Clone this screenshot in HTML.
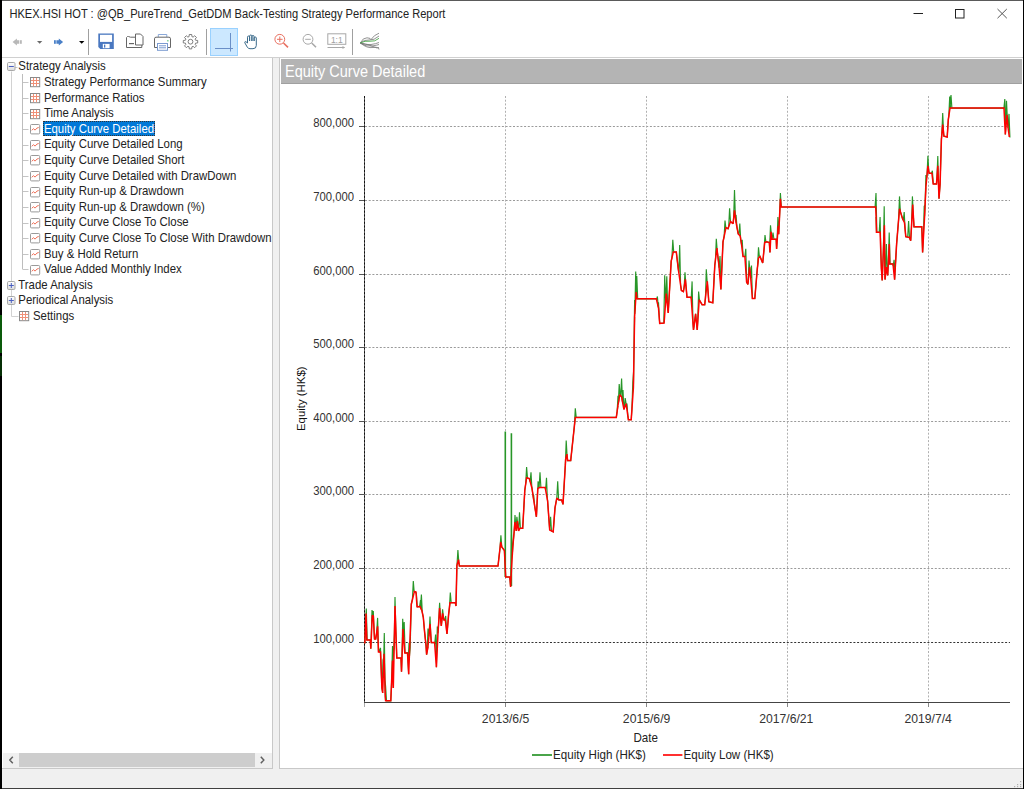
<!DOCTYPE html>
<html><head><meta charset="utf-8">
<style>
*{margin:0;padding:0;box-sizing:border-box}
html,body{width:1024px;height:789px;overflow:hidden;background:#fff;font-family:"Liberation Sans",sans-serif;color:#000}
.a{position:absolute}
.t{position:absolute;white-space:nowrap;line-height:1}
svg{position:absolute;overflow:visible}
</style></head><body>

<div class="a" style="left:0;top:0;width:1024px;height:1px;background:#5a5a5a"></div>
<div class="t" style="left:9.40px;top:8.60px;font-size:11.1px;color:#222;transform:scaleY(1.1);transform-origin:0 9.40px;">HKEX.HSI HOT : @QB_PureTrend_GetDDM Back-Testing Strategy Performance Report</div>
<div class="a" style="left:2px;top:57px;width:1021px;height:1px;background:#d0d0d0"></div>
<div class="a" style="left:2px;top:58px;width:271px;height:711px;background:#fff;border-right:1px solid #c8c8c8;border-bottom:1px solid #c8c8c8"></div>
<div class="a" style="left:273px;top:58px;width:6px;height:711px;background:#f0f0f0"></div>
<div class="a" style="left:279px;top:58px;width:744px;height:711px;background:#fff;border-left:1px solid #c8c8c8;border-bottom:1px solid #c8c8c8"></div>
<div class="a" style="left:281px;top:59px;width:741px;height:24.5px;background:#b4b4b4;border-bottom:1.2px solid #a0a0a0"></div>
<div class="t" style="left:285.00px;top:64.93px;font-size:14.5px;color:#fff;transform:scaleY(1.1);transform-origin:0 12.27px;">Equity Curve Detailed</div>
<svg style="left:900px;top:0" width="124" height="26" viewBox="900 0 124 26"><path d="M913.5 13.5H923" stroke="#222" stroke-width="1"/><rect x="955.5" y="9.5" width="8.5" height="8.5" fill="none" stroke="#222" stroke-width="1"/><path d="M997.5 9L1006.8 18.2M1006.8 9L997.5 18.2" stroke="#555" stroke-width="1"/></svg>
<svg style="left:0;top:25px" width="400" height="32" viewBox="0 25 400 32"><path d="M12.6 42L16.9 38.6V40.2H19.3V43.8H16.9V45.4Z" fill="#b8b8b8"/><rect x="20" y="40.2" width="1.8" height="3.6" fill="#b8b8b8"/><path d="M37 41H42.3L39.65 43.7Z" fill="#6a6a6a"/><rect x="54" y="40.2" width="1.8" height="3.6" fill="#4a80c8"/><path d="M56.4 40.2H58.8V38.6L63.1 42L58.8 45.4V43.8H56.4Z" fill="#4a80c8"/><path d="M79 41H84.4L81.7 43.7Z" fill="#000"/><path d="M88.5 29V55" stroke="#a0a0a0" stroke-width="1"/><path d="M206.5 29V55" stroke="#a0a0a0" stroke-width="1"/><path d="M352.5 29V55" stroke="#a0a0a0" stroke-width="1"/><path d="M98.3 33.4H113.8V48.9H100.3L98.3 46.9Z" fill="#4a78c0"/><rect x="100" y="34.8" width="12.1" height="7.1" fill="#fff"/><rect x="102.8" y="43.9" width="6.8" height="4.3" fill="#fff"/><rect x="104" y="44.6" width="1.3" height="3" fill="#4a78c0"/><path d="M135.5 37.2H130.5L128.5 36.5H127.5L126.5 37.5V47.5H141.8V45" fill="none" stroke="#666" stroke-width="1"/><path d="M135.5 34H140.5L143 36.5V45H135.5Z" fill="#fff" stroke="#666" stroke-width="1"/><path d="M129 43.6H134" stroke="#666" stroke-width="1.2"/><path d="M158.3 37V34.5H166.8V37" fill="none" stroke="#8aa8d8" stroke-width="1"/><path d="M157 47.5H154.5V38.8Q154.5 37.2 156 37.2H169Q170.5 37.2 170.5 38.8V47.5H168" fill="#fff" stroke="#666" stroke-width="1"/><rect x="157.5" y="43.5" width="10" height="6.8" fill="#fff" stroke="#7a9ad0" stroke-width="1"/><path d="M159 45.8H166M159 47.8H166" stroke="#7a9ad0" stroke-width="1"/><rect x="167.2" y="40.2" width="1.3" height="1.2" fill="#4cbf6c"/><path d="M189.09 36.59L189.26 34.51L191.74 34.51L191.91 36.59L193.11 37.09L194.71 35.74L196.46 37.49L195.11 39.09L195.61 40.29L197.69 40.46L197.69 42.94L195.61 43.11L195.11 44.31L196.46 45.91L194.71 47.66L193.11 46.31L191.91 46.81L191.74 48.89L189.26 48.89L189.09 46.81L187.89 46.31L186.29 47.66L184.54 45.91L185.89 44.31L185.39 43.11L183.31 42.94L183.31 40.46L185.39 40.29L185.89 39.09L184.54 37.49L186.29 35.74L187.89 37.09Z" fill="none" stroke="#707070" stroke-width="0.9"/><circle cx="190.5" cy="41.7" r="2.4" fill="none" stroke="#707070" stroke-width="0.9"/><rect x="210.5" y="28.5" width="27" height="27" fill="#cce8ff" stroke="#99d1ff" stroke-width="1"/><path d="M230.5 33V51.5M215 48.5H233" stroke="#6a8fc8" stroke-width="1"/><path d="M247.5 47.5L244.8 42.8Q244.5 41.5 245.8 41.6L247.5 43V37.2Q247.5 36 248.6 36Q249.6 36 249.6 37.2V41V36.2Q249.6 35 250.8 35Q251.9 35 251.9 36.2V41V36.6Q251.9 35.5 253 35.5Q254.1 35.5 254.1 36.6V41V38Q254.1 37 255.2 37Q256.3 37 256.3 38V45.5Q256.3 48.7 253 48.7H250Q248.7 48.7 247.5 47.5Z" fill="#fff" stroke="#3a6a8a" stroke-width="1"/><circle cx="279.8" cy="39.3" r="4.9" fill="none" stroke="#e87060" stroke-width="1"/><path d="M283.5 43L288 47.4" stroke="#e87060" stroke-width="1.6"/><path d="M277 39.3H282.6M279.8 36.5V42.1" stroke="#e87060" stroke-width="1"/><circle cx="308" cy="39.3" r="4.9" fill="none" stroke="#a8a8a8" stroke-width="1"/><path d="M311.7 43L316 47.2" stroke="#a8a8a8" stroke-width="1.6"/><path d="M305.2 39.3H310.8" stroke="#a8a8a8" stroke-width="1"/><rect x="327.8" y="33.8" width="18" height="10.5" fill="none" stroke="#a8a8a8" stroke-width="1"/><path d="M327.5 47.5H344.5" stroke="#a8a8a8" stroke-width="1"/><path d="M342.5 46L345 47.5L342.5 49" fill="#a8a8a8"/><text x="336.8" y="42.6" font-size="8.5" text-anchor="middle" fill="#a0a0a0" font-family="Liberation Sans">1:1</text><g fill="none" stroke="#777" stroke-width="0.8"><path d="M360.3 43Q363 37.5 367 37.8T371 39.5Q374 35 379 33.2"/><path d="M360.3 43Q364 39.5 369 40T379 36"/><path d="M360.3 43Q366 45.2 371 44.5T379 42.5"/><path d="M360.3 43Q366 47 372 46T379 44.5"/><path d="M360.3 43Q367 48.5 373 47.5T379 49.5"/><path d="M360.3 43Q368 44 373 46.5T379 47.5"/></g><path d="M360.3 43Q365 40.5 370 41.2T379 38.3" fill="none" stroke="#4aa84a" stroke-width="0.9"/></svg>
<div class="a" style="left:3px;top:753px;width:269px;height:15px;background:#f0f0f0"></div>
<div class="a" style="left:19px;top:753px;width:236px;height:14px;background:#cdcdcd"></div>
<svg style="left:0;top:750px" width="280" height="20" viewBox="0 750 280 20"><path d="M12.8 756.8L9.8 760L12.8 763.2M260.8 756.8L263.8 760L260.8 763.2" fill="none" stroke="#606060" stroke-width="1.5"/></svg>
<svg style="left:0;top:0" width="280" height="340" viewBox="0 0 280 340"><path d="M11.5 71.5V316.5H18.5" stroke="#d2d2d2" stroke-width="1" fill="none"/><path d="M22.5 74V269.5" stroke="#bdbdbd" stroke-width="1" fill="none"/><path d="M23 82.5H28.5" stroke="#c4c4c4" stroke-width="1" fill="none"/><path d="M23 98.5H28.5" stroke="#c4c4c4" stroke-width="1" fill="none"/><path d="M23 113.5H28.5" stroke="#c4c4c4" stroke-width="1" fill="none"/><path d="M23 129.5H28.5" stroke="#c4c4c4" stroke-width="1" fill="none"/><path d="M23 145.5H28.5" stroke="#c4c4c4" stroke-width="1" fill="none"/><path d="M23 160.5H28.5" stroke="#c4c4c4" stroke-width="1" fill="none"/><path d="M23 176.5H28.5" stroke="#c4c4c4" stroke-width="1" fill="none"/><path d="M23 191.5H28.5" stroke="#c4c4c4" stroke-width="1" fill="none"/><path d="M23 207.5H28.5" stroke="#c4c4c4" stroke-width="1" fill="none"/><path d="M23 223.5H28.5" stroke="#c4c4c4" stroke-width="1" fill="none"/><path d="M23 238.5H28.5" stroke="#c4c4c4" stroke-width="1" fill="none"/><path d="M23 254.5H28.5" stroke="#c4c4c4" stroke-width="1" fill="none"/><path d="M23 269.5H28.5" stroke="#c4c4c4" stroke-width="1" fill="none"/><path d="M15 67.5H17.5" stroke="#c8c8c8" stroke-width="1"/><defs><linearGradient id="g0" x1="0" y1="0" x2="0" y2="1"><stop offset="0" stop-color="#fff"/><stop offset="1" stop-color="#dcdcdc"/></linearGradient></defs><rect x="7.5" y="62.5" width="7.5" height="8" rx="1.2" fill="url(#g0)" stroke="#a8a8a8"/><path d="M8.8 66.5H13.8" stroke="#4a5fc0" stroke-width="1"/><rect x="30.5" y="77.5" width="9.2" height="9.2" fill="#fff" stroke="#8a8a8a" stroke-width="1"/><path d="M33.5 78.0V86.2M36.5 78.0V86.2M31.0 80.5H39.2M31.0 83.5H39.2" stroke="#f09078" stroke-width="1"/><rect x="30.5" y="93.5" width="9.2" height="9.2" fill="#fff" stroke="#8a8a8a" stroke-width="1"/><path d="M33.5 94.0V102.2M36.5 94.0V102.2M31.0 96.5H39.2M31.0 99.5H39.2" stroke="#f09078" stroke-width="1"/><rect x="30.5" y="109.5" width="9.2" height="9.2" fill="#fff" stroke="#8a8a8a" stroke-width="1"/><path d="M33.5 110.0V118.2M36.5 110.0V118.2M31.0 112.5H39.2M31.0 115.5H39.2" stroke="#f09078" stroke-width="1"/><rect x="30.5" y="124.5" width="9.2" height="9.4" rx="1" fill="#fff" stroke="#9a9a9a" stroke-width="1"/><path d="M31.7 130.3L33.5 128.7L35.1 130.1L36.9 128.1L38.7 127.5" stroke="#f07058" stroke-width="1" fill="none"/><rect x="30.5" y="140.5" width="9.2" height="9.4" rx="1" fill="#fff" stroke="#9a9a9a" stroke-width="1"/><path d="M31.7 146.3L33.5 144.7L35.1 146.1L36.9 144.1L38.7 143.5" stroke="#f07058" stroke-width="1" fill="none"/><rect x="30.5" y="155.5" width="9.2" height="9.4" rx="1" fill="#fff" stroke="#9a9a9a" stroke-width="1"/><path d="M31.7 161.3L33.5 159.7L35.1 161.1L36.9 159.1L38.7 158.5" stroke="#f07058" stroke-width="1" fill="none"/><rect x="30.5" y="171.5" width="9.2" height="9.4" rx="1" fill="#fff" stroke="#9a9a9a" stroke-width="1"/><path d="M31.7 177.3L33.5 175.7L35.1 177.1L36.9 175.1L38.7 174.5" stroke="#f07058" stroke-width="1" fill="none"/><rect x="30.5" y="187.5" width="9.2" height="9.4" rx="1" fill="#fff" stroke="#9a9a9a" stroke-width="1"/><path d="M31.7 193.3L33.5 191.7L35.1 193.1L36.9 191.1L38.7 190.5" stroke="#f07058" stroke-width="1" fill="none"/><rect x="30.5" y="202.5" width="9.2" height="9.4" rx="1" fill="#fff" stroke="#9a9a9a" stroke-width="1"/><path d="M31.7 208.3L33.5 206.7L35.1 208.1L36.9 206.1L38.7 205.5" stroke="#f07058" stroke-width="1" fill="none"/><rect x="30.5" y="218.5" width="9.2" height="9.4" rx="1" fill="#fff" stroke="#9a9a9a" stroke-width="1"/><path d="M31.7 224.3L33.5 222.7L35.1 224.1L36.9 222.1L38.7 221.5" stroke="#f07058" stroke-width="1" fill="none"/><rect x="30.5" y="233.5" width="9.2" height="9.4" rx="1" fill="#fff" stroke="#9a9a9a" stroke-width="1"/><path d="M31.7 239.3L33.5 237.7L35.1 239.1L36.9 237.1L38.7 236.5" stroke="#f07058" stroke-width="1" fill="none"/><rect x="30.5" y="249.5" width="9.2" height="9.4" rx="1" fill="#fff" stroke="#9a9a9a" stroke-width="1"/><path d="M31.7 255.3L33.5 253.7L35.1 255.1L36.9 253.1L38.7 252.5" stroke="#f07058" stroke-width="1" fill="none"/><rect x="30.5" y="265.5" width="9.2" height="9.4" rx="1" fill="#fff" stroke="#9a9a9a" stroke-width="1"/><path d="M31.7 271.3L33.5 269.7L35.1 271.1L36.9 269.1L38.7 268.5" stroke="#f07058" stroke-width="1" fill="none"/><defs><linearGradient id="g14" x1="0" y1="0" x2="0" y2="1"><stop offset="0" stop-color="#fff"/><stop offset="1" stop-color="#dcdcdc"/></linearGradient></defs><rect x="7.5" y="281.5" width="7.5" height="8" rx="1.2" fill="url(#g14)" stroke="#a8a8a8"/><path d="M8.8 285.5H13.8" stroke="#4a5fc0" stroke-width="1"/><path d="M11.3 283.0V288.0" stroke="#4a5fc0" stroke-width="1"/><defs><linearGradient id="g15" x1="0" y1="0" x2="0" y2="1"><stop offset="0" stop-color="#fff"/><stop offset="1" stop-color="#dcdcdc"/></linearGradient></defs><rect x="7.5" y="296.5" width="7.5" height="8" rx="1.2" fill="url(#g15)" stroke="#a8a8a8"/><path d="M8.8 300.5H13.8" stroke="#4a5fc0" stroke-width="1"/><path d="M11.3 298.0V303.0" stroke="#4a5fc0" stroke-width="1"/><rect x="19.5" y="311.5" width="9.2" height="9.2" fill="#fff" stroke="#8a8a8a" stroke-width="1"/><path d="M22.5 312.0V320.2M25.5 312.0V320.2M20.0 314.5H28.2M20.0 317.5H28.2" stroke="#f09078" stroke-width="1"/></svg>
<div class="t" style="left:18.30px;top:61.45px;font-size:11.4px;color:#222;transform:scaleY(1.1);transform-origin:0 9.65px;">Strategy Analysis</div>
<div class="t" style="left:43.90px;top:77.05px;font-size:11.4px;color:#222;transform:scaleY(1.1);transform-origin:0 9.65px;">Strategy Performance Summary</div>
<div class="t" style="left:43.90px;top:92.65px;font-size:11.4px;color:#222;transform:scaleY(1.1);transform-origin:0 9.65px;">Performance Ratios</div>
<div class="t" style="left:43.90px;top:108.25px;font-size:11.4px;color:#222;transform:scaleY(1.1);transform-origin:0 9.65px;">Time Analysis</div>
<div class="a" style="left:42.6px;top:121.25px;width:112.6px;height:15px;background:#0078d7;outline:1px dotted #333;outline-offset:-1px"></div>
<div class="t" style="left:43.90px;top:123.85px;font-size:11.4px;color:#fff;transform:scaleY(1.1);transform-origin:0 9.65px;">Equity Curve Detailed</div>
<div class="t" style="left:43.90px;top:139.45px;font-size:11.4px;color:#222;transform:scaleY(1.1);transform-origin:0 9.65px;">Equity Curve Detailed Long</div>
<div class="t" style="left:43.90px;top:155.05px;font-size:11.4px;color:#222;transform:scaleY(1.1);transform-origin:0 9.65px;">Equity Curve Detailed Short</div>
<div class="t" style="left:43.90px;top:170.65px;font-size:11.4px;color:#222;transform:scaleY(1.1);transform-origin:0 9.65px;">Equity Curve Detailed with DrawDown</div>
<div class="t" style="left:43.90px;top:186.25px;font-size:11.4px;color:#222;transform:scaleY(1.1);transform-origin:0 9.65px;">Equity Run-up &amp; Drawdown</div>
<div class="t" style="left:43.90px;top:201.85px;font-size:11.4px;color:#222;transform:scaleY(1.1);transform-origin:0 9.65px;">Equity Run-up &amp; Drawdown (%)</div>
<div class="t" style="left:43.90px;top:217.45px;font-size:11.4px;color:#222;transform:scaleY(1.1);transform-origin:0 9.65px;">Equity Curve Close To Close</div>
<div class="t" style="left:43.90px;top:233.05px;font-size:11.4px;color:#222;transform:scaleY(1.1);transform-origin:0 9.65px;">Equity Curve Close To Close With Drawdown</div>
<div class="t" style="left:43.90px;top:248.65px;font-size:11.4px;color:#222;transform:scaleY(1.1);transform-origin:0 9.65px;">Buy &amp; Hold Return</div>
<div class="t" style="left:43.90px;top:264.25px;font-size:11.4px;color:#222;transform:scaleY(1.1);transform-origin:0 9.65px;">Value Added Monthly Index</div>
<div class="t" style="left:18.30px;top:279.85px;font-size:11.4px;color:#222;transform:scaleY(1.1);transform-origin:0 9.65px;">Trade Analysis</div>
<div class="t" style="left:18.30px;top:295.45px;font-size:11.4px;color:#222;transform:scaleY(1.1);transform-origin:0 9.65px;">Periodical Analysis</div>
<div class="t" style="left:33.00px;top:311.05px;font-size:11.4px;color:#222;transform:scaleY(1.1);transform-origin:0 9.65px;">Settings</div>
<svg style="left:0;top:0" width="1024" height="789" viewBox="0 0 1024 789"><path d="M365 126.5H1010" stroke="#9a9a9a" stroke-width="1" stroke-dasharray="2 1.7"/><path d="M359 126.5H364" stroke="#555" stroke-width="1"/><path d="M365 200.5H1010" stroke="#9a9a9a" stroke-width="1" stroke-dasharray="2 1.7"/><path d="M359 200.5H364" stroke="#555" stroke-width="1"/><path d="M365 274.5H1010" stroke="#9a9a9a" stroke-width="1" stroke-dasharray="2 1.7"/><path d="M359 274.5H364" stroke="#555" stroke-width="1"/><path d="M365 347.5H1010" stroke="#9a9a9a" stroke-width="1" stroke-dasharray="2 1.7"/><path d="M359 347.5H364" stroke="#555" stroke-width="1"/><path d="M365 421.5H1010" stroke="#9a9a9a" stroke-width="1" stroke-dasharray="2 1.7"/><path d="M359 421.5H364" stroke="#555" stroke-width="1"/><path d="M365 494.5H1010" stroke="#9a9a9a" stroke-width="1" stroke-dasharray="2 1.7"/><path d="M359 494.5H364" stroke="#555" stroke-width="1"/><path d="M365 568.5H1010" stroke="#9a9a9a" stroke-width="1" stroke-dasharray="2 1.7"/><path d="M359 568.5H364" stroke="#555" stroke-width="1"/><path d="M365 642.5H1010" stroke="#333" stroke-width="1" stroke-dasharray="2 1.7"/><path d="M359 642.5H364" stroke="#555" stroke-width="1"/><path d="M505.5 96V702" stroke="#b0b0b0" stroke-width="1" stroke-dasharray="2 1.7"/><path d="M505.5 702V707" stroke="#888" stroke-width="1"/><path d="M646.5 96V702" stroke="#b0b0b0" stroke-width="1" stroke-dasharray="2 1.7"/><path d="M646.5 702V707" stroke="#888" stroke-width="1"/><path d="M787.5 96V702" stroke="#b0b0b0" stroke-width="1" stroke-dasharray="2 1.7"/><path d="M787.5 702V707" stroke="#888" stroke-width="1"/><path d="M928.5 96V702" stroke="#b0b0b0" stroke-width="1" stroke-dasharray="2 1.7"/><path d="M928.5 702V707" stroke="#888" stroke-width="1"/><path d="M364.5 702V707" stroke="#aaa" stroke-width="1"/><path d="M364.5 96V702" stroke="#666" stroke-width="1"/><path d="M364.5 96V702" stroke="#111" stroke-width="1" stroke-dasharray="2 1.7"/><path d="M364 702.5H1010" stroke="#444" stroke-width="1"/><polyline points="364.8,643.5 366.0,613.6 365.4,628.5 366.3,608.5 367.2,640.0 366.8,640.0 370.3,640.0 370.8,648.6 371.1,641.9 372.0,610.0 372.9,615.7 372.3,615.3 373.3,616.0 372.4,615.4 373.3,611.0 374.2,633.2 374.5,639.0 375.7,639.0 377.6,626.4 376.7,632.4 377.6,617.9 378.5,652.0 378.5,652.0 377.6,626.4 378.5,648.0 379.4,652.0 380.5,652.0 379.6,652.0 380.5,647.8 381.4,675.1 381.9,688.0 382.7,693.0 382.1,689.3 383.0,660.0 383.9,656.8 384.0,653.8 383.4,671.9 384.3,633.0 385.2,693.2 385.3,696.5 385.6,700.8 384.7,676.8 385.6,686.0 386.5,700.8 390.8,700.8 392.5,660.6 391.6,681.9 392.5,646.0 393.4,683.2 393.3,688.0 392.7,667.5 393.6,652.0 394.5,630.1 395.0,606.0 394.1,649.4 395.0,597.0 395.9,632.0 396.8,658.0 401.0,658.0 401.5,671.7 401.8,663.2 402.7,618.7 403.6,637.0 403.0,629.0 403.3,633.0 404.2,622.0 405.1,652.9 404.8,652.9 407.5,652.9 408.7,674.3 408.1,663.6 409.0,643.5 409.9,641.9 409.3,658.1 410.2,648.0 411.1,609.6 411.3,604.2 412.4,599.7 413.3,581.0 414.2,592.2 414.4,591.4 416.0,592.0 415.5,591.8 416.4,594.0 417.3,606.8 417.0,606.8 420.1,606.5 419.6,606.5 420.5,600.0 421.4,609.6 420.5,607.4 421.4,594.5 422.3,612.5 422.0,611.0 423.3,617.3 424.6,632.0 426.0,645.3 426.6,654.6 428.0,646.6 427.1,651.7 428.0,628.6 428.9,636.4 430.0,624.0 429.1,634.2 430.0,616.6 430.9,636.9 431.3,642.6 434.6,642.6 434.7,644.0 435.6,634.6 436.5,665.1 436.4,667.2 436.4,667.2 437.3,626.6 438.2,630.1 438.0,633.3 439.6,608.0 438.7,622.2 439.6,602.7 440.5,617.5 441.3,626.0 442.6,613.3 441.7,622.1 442.6,609.3 443.5,617.6 444.0,620.0 445.3,620.0 444.8,620.0 445.7,616.0 446.6,630.7 447.0,634.0 448.6,614.6 450.0,602.7 449.4,607.8 450.3,592.6 451.2,602.7 455.3,602.7 456.0,606.0 456.9,565.3 457.0,564.9 457.9,550.0 458.8,561.7 458.5,559.6 459.4,566.0 498.0,566.0 500.7,542.0 500.0,548.2 500.9,535.4 501.8,547.0 501.8,547.0 504.4,550.5 505.7,577.0 509.8,577.0 510.6,586.9 511.5,568.2 510.6,586.9 511.5,534.5 512.4,553.5 512.8,547.0 515.0,522.0 514.1,532.2 515.0,515.0 515.9,528.2 516.3,531.0 516.0,528.9 516.9,516.8 517.8,524.5 517.4,521.2 518.6,531.0 518.6,531.0 519.5,512.3 520.4,528.3 519.9,528.3 522.7,528.3 524.8,490.2 526.6,477.7 525.7,483.9 526.6,467.1 527.5,478.0 529.3,478.6 530.1,481.5 531.0,472.4 531.9,488.0 532.0,488.4 533.7,500.0 532.8,493.9 533.7,495.5 534.6,505.6 536.4,516.8 537.8,488.4 537.2,500.6 538.1,481.3 539.0,487.7 539.4,487.5 539.1,487.7 540.0,472.4 540.9,487.5 545.2,487.5 545.6,489.7 546.5,477.7 547.4,499.7 547.6,500.8 549.7,530.0 549.7,530.0 550.6,516.8 551.5,531.0 553.2,531.9 555.0,507.9 556.8,498.1 556.8,498.1 557.7,481.3 558.6,499.6 558.9,499.9 561.6,499.9 563.0,504.4 565.7,458.8 565.3,465.6 566.2,440.5 567.1,456.0 566.9,454.2 567.6,460.6 570.7,460.6 575.3,417.4 574.4,425.9 575.3,408.3 576.2,417.4 616.3,417.4 617.9,406.0 617.1,411.7 618.0,395.8 618.9,400.0 618.3,403.6 619.2,384.0 620.1,395.0 619.8,394.6 621.6,396.9 620.7,395.8 621.6,378.6 622.5,401.8 622.1,399.6 623.0,390.0 623.9,409.4 623.9,409.4 624.3,408.4 625.2,398.0 626.1,403.7 626.1,403.7 626.1,403.7 627.0,404.0 627.9,416.2 628.4,419.7 631.2,419.7 631.9,409.6 632.8,382.0 633.7,370.1 633.4,387.8 634.6,317.0 633.7,370.1 634.6,300.0 635.5,302.9 634.8,313.9 635.7,271.4 636.6,295.9 636.2,292.0 635.9,296.7 636.8,276.0 637.7,298.8 636.9,298.8 656.3,298.8 656.5,299.6 657.4,296.5 658.3,307.1 658.5,307.9 657.6,304.2 658.5,302.2 659.4,319.5 659.7,323.4 664.1,323.0 663.8,323.0 664.7,275.3 665.6,302.0 666.2,293.6 665.9,297.8 666.8,276.3 667.7,308.1 668.2,312.9 671.2,261.1 671.9,258.1 672.8,239.8 673.7,252.0 673.3,252.0 676.3,252.0 678.3,269.2 678.8,272.6 679.7,244.9 680.6,285.0 681.4,290.5 683.4,291.6 684.1,287.3 685.0,272.3 685.9,285.0 685.4,279.4 687.0,297.2 691.1,297.2 691.2,298.6 692.1,281.4 693.0,323.2 693.5,330.0 695.6,313.9 697.2,330.0 697.7,322.4 698.6,291.6 699.5,300.2 699.2,299.7 702.1,304.7 704.7,304.7 705.4,298.4 706.3,269.2 707.2,282.3 707.3,281.4 708.8,301.7 712.8,302.7 714.8,265.2 715.4,260.3 716.3,238.8 717.2,250.6 716.9,248.0 718.9,265.2 719.1,267.6 720.0,256.0 720.9,289.5 720.9,289.5 723.0,241.9 724.1,236.7 725.0,220.6 725.9,228.2 726.0,227.7 728.0,228.7 728.7,226.7 729.6,208.4 730.5,221.6 730.5,221.6 733.1,223.6 734.5,210.4 733.6,218.9 734.5,190.1 735.4,217.3 736.1,222.6 735.2,215.7 736.1,215.5 737.0,227.4 738.2,233.8 738.9,234.6 739.8,223.6 740.7,239.2 740.2,236.0 741.6,245.0 741.3,243.1 742.2,239.8 743.1,256.5 743.0,256.5 744.9,256.5 744.9,256.5 745.8,248.7 746.7,282.2 746.6,282.0 747.9,284.5 748.1,282.5 749.0,260.6 749.9,270.1 749.6,267.2 750.7,277.9 750.6,276.9 751.5,265.5 752.4,298.5 752.4,298.5 754.8,298.5 757.3,268.8 758.5,258.1 757.6,266.1 758.5,247.4 759.4,257.1 760.0,256.5 762.7,263.0 764.7,242.5 764.1,248.7 765.0,235.0 765.9,241.9 766.4,241.7 769.3,242.5 770.0,252.4 769.6,246.7 770.5,225.2 771.4,234.5 771.0,231.8 772.1,239.2 772.1,239.2 773.0,232.6 773.9,239.2 776.2,239.2 776.6,249.0 777.0,243.3 777.9,217.0 778.8,232.2 778.2,226.0 778.7,234.3 780.4,198.8 779.5,217.6 780.4,193.0 781.3,207.0 781.2,207.0 875.7,207.0 875.1,207.0 876.0,193.0 876.9,232.3 876.1,217.0 876.5,232.3 880.1,232.3 879.2,232.3 880.1,217.0 881.0,257.6 881.4,268.8 882.2,280.4 883.3,252.8 884.2,206.2 885.1,278.7 884.4,225.2 885.0,279.6 886.4,267.2 885.5,275.2 886.4,244.1 887.3,272.9 887.7,275.4 888.3,263.7 889.2,232.6 890.1,263.9 889.3,244.1 889.7,263.9 893.0,263.9 893.2,265.9 894.1,259.8 895.0,272.5 894.6,279.6 896.6,244.1 899.5,208.7 898.6,219.7 899.5,196.4 900.4,211.7 902.5,218.6 903.3,220.2 904.2,212.0 905.1,229.2 904.5,222.7 905.8,236.7 907.7,237.1 908.6,221.0 909.5,237.8 909.4,237.5 910.7,240.8 911.5,226.3 912.4,196.4 913.3,214.8 912.7,204.6 914.0,226.8 921.8,226.8 922.6,252.4 923.3,239.7 924.2,206.2 925.1,205.0 924.6,216.1 925.9,187.2 925.0,207.2 925.9,175.0 926.8,177.6 927.9,165.8 927.0,175.4 927.9,155.9 928.8,171.3 929.1,173.2 931.9,173.2 931.5,173.2 932.4,170.7 933.3,183.9 933.2,183.9 936.5,183.9 937.8,165.8 936.9,178.3 937.8,155.9 938.7,190.5 939.0,198.7 940.1,183.9 941.4,139.4 942.7,124.6 941.8,134.8 942.7,113.0 943.6,133.2 943.9,136.1 947.2,137.0 948.3,119.7 948.8,116.3 949.7,96.6 950.6,108.1 950.0,108.1 950.1,108.1 951.0,95.0 951.9,108.1 1004.0,108.1 1003.9,108.1 1004.8,99.0 1005.7,129.8 1005.3,134.5 1005.6,131.0 1006.5,100.7 1007.4,119.5 1007.0,114.7 1008.1,127.9 1008.1,127.9 1009.0,113.9 1009.9,137.0 1009.3,137.0" fill="none" stroke="#289628" stroke-width="1.15" stroke-linejoin="miter" stroke-miterlimit="2"/><path d="M505.3 577V431.4M511.4 586V433.2" stroke="#289628" stroke-width="1.6"/><polyline points="364.8,643.5 366.0,613.6 366.8,640.0 370.3,640.0 370.8,648.6 372.3,615.3 373.3,616.0 374.5,639.0 375.7,639.0 377.6,626.4 378.5,652.0 380.5,652.0 381.9,688.0 382.7,693.0 384.0,653.8 385.3,696.5 385.6,700.8 390.8,700.8 392.5,660.6 393.3,688.0 395.0,606.0 396.8,658.0 401.0,658.0 401.5,671.7 403.0,629.0 404.8,652.9 407.5,652.9 408.7,674.3 411.3,604.2 414.4,591.4 416.0,592.0 417.0,606.8 420.1,606.5 422.0,611.0 423.3,617.3 424.6,632.0 426.0,645.3 426.6,654.6 428.0,646.6 430.0,624.0 431.3,642.6 434.6,642.6 436.4,667.2 438.0,633.3 439.6,608.0 441.3,626.0 442.6,613.3 444.0,620.0 445.3,620.0 447.0,634.0 448.6,614.6 450.0,602.7 455.3,602.7 456.0,606.0 456.9,565.3 458.5,559.6 459.4,566.0 498.0,566.0 500.7,542.0 501.8,547.0 504.4,550.5 505.7,577.0 509.8,577.0 510.6,586.9 511.5,568.2 512.8,547.0 515.0,522.0 516.3,531.0 517.4,521.2 518.6,531.0 519.9,528.3 522.7,528.3 524.8,490.2 526.6,477.7 529.3,478.6 532.0,488.4 533.7,500.0 536.4,516.8 537.8,488.4 539.4,487.5 545.2,487.5 547.6,500.8 549.7,530.0 553.2,531.9 555.0,507.9 556.8,498.1 558.9,499.9 561.6,499.9 563.0,504.4 565.7,458.8 566.9,454.2 567.6,460.6 570.7,460.6 575.3,417.4 616.3,417.4 617.9,406.0 619.8,394.6 621.6,396.9 623.9,409.4 626.1,403.7 628.4,419.7 631.2,419.7 633.4,387.8 634.6,317.0 636.2,292.0 636.9,298.8 656.3,298.8 658.5,307.9 659.7,323.4 664.1,323.0 666.2,293.6 668.2,312.9 671.2,261.1 673.3,252.0 676.3,252.0 678.3,269.2 681.4,290.5 683.4,291.6 685.4,279.4 687.0,297.2 691.1,297.2 693.5,330.0 695.6,313.9 697.2,330.0 699.2,299.7 702.1,304.7 704.7,304.7 707.3,281.4 708.8,301.7 712.8,302.7 714.8,265.2 716.9,248.0 718.9,265.2 720.9,289.5 723.0,241.9 726.0,227.7 728.0,228.7 730.5,221.6 733.1,223.6 734.5,210.4 736.1,222.6 738.2,233.8 740.2,236.0 741.6,245.0 743.0,256.5 744.9,256.5 746.6,282.0 747.9,284.5 749.6,267.2 750.7,277.9 752.4,298.5 754.8,298.5 757.3,268.8 758.5,258.1 760.0,256.5 762.7,263.0 764.7,242.5 766.4,241.7 769.3,242.5 770.0,252.4 771.0,231.8 772.1,239.2 776.2,239.2 776.6,249.0 778.2,226.0 778.7,234.3 780.4,198.8 781.2,207.0 875.7,207.0 876.1,217.0 876.5,232.3 880.1,232.3 881.4,268.8 882.2,280.4 884.4,225.2 885.0,279.6 886.4,267.2 887.7,275.4 889.3,244.1 889.7,263.9 893.0,263.9 894.6,279.6 896.6,244.1 899.5,208.7 902.5,218.6 904.5,222.7 905.8,236.7 909.4,237.5 910.7,240.8 912.7,204.6 914.0,226.8 921.8,226.8 922.6,252.4 924.6,216.1 925.9,187.2 927.9,165.8 929.1,173.2 931.9,173.2 933.2,183.9 936.5,183.9 937.8,165.8 939.0,198.7 940.1,183.9 941.4,139.4 942.7,124.6 943.9,136.1 947.2,137.0 948.3,119.7 950.0,108.1 1004.0,108.1 1005.3,134.5 1007.0,114.7 1008.1,127.9 1009.3,137.0" fill="none" stroke="#ff0000" stroke-width="1.5" stroke-linejoin="miter" stroke-miterlimit="2"/><path d="M532 755H552" stroke="#4aa44a" stroke-width="2"/><path d="M663 755H682.4" stroke="#ff3030" stroke-width="2"/></svg>
<div class="t" style="right:670px;top:117.63px;font-size:11.3px;color:#333;transform:scaleY(1.1);transform-origin:0 9.57px">800,000</div>
<div class="t" style="right:670px;top:191.63px;font-size:11.3px;color:#333;transform:scaleY(1.1);transform-origin:0 9.57px">700,000</div>
<div class="t" style="right:670px;top:265.63px;font-size:11.3px;color:#333;transform:scaleY(1.1);transform-origin:0 9.57px">600,000</div>
<div class="t" style="right:670px;top:338.63px;font-size:11.3px;color:#333;transform:scaleY(1.1);transform-origin:0 9.57px">500,000</div>
<div class="t" style="right:670px;top:412.63px;font-size:11.3px;color:#333;transform:scaleY(1.1);transform-origin:0 9.57px">400,000</div>
<div class="t" style="right:670px;top:485.63px;font-size:11.3px;color:#333;transform:scaleY(1.1);transform-origin:0 9.57px">300,000</div>
<div class="t" style="right:670px;top:559.63px;font-size:11.3px;color:#333;transform:scaleY(1.1);transform-origin:0 9.57px">200,000</div>
<div class="t" style="right:670px;top:633.63px;font-size:11.3px;color:#333;transform:scaleY(1.1);transform-origin:0 9.57px">100,000</div>
<div class="t" style="left:445.6px;width:120px;text-align:center;top:713.27px;font-size:12.2px;color:#333;transform:scaleY(1.05);transform-origin:0 10.33px">2013/6/5</div>
<div class="t" style="left:586.6px;width:120px;text-align:center;top:713.27px;font-size:12.2px;color:#333;transform:scaleY(1.05);transform-origin:0 10.33px">2015/6/9</div>
<div class="t" style="left:726.3px;width:120px;text-align:center;top:713.27px;font-size:12.2px;color:#333;transform:scaleY(1.05);transform-origin:0 10.33px">2017/6/21</div>
<div class="t" style="left:868.2px;width:120px;text-align:center;top:713.27px;font-size:12.2px;color:#333;transform:scaleY(1.05);transform-origin:0 10.33px">2019/7/4</div>
<div class="t" style="left:633.40px;top:732.18px;font-size:11.6px;color:#222;transform:scaleY(1.1);transform-origin:0 9.82px;">Date</div>
<div class="t" style="left:553.10px;top:748.88px;font-size:11.6px;color:#222;transform:scaleY(1.1);transform-origin:0 9.82px;">Equity High (HK$)</div>
<div class="t" style="left:683.50px;top:748.88px;font-size:11.6px;color:#222;transform:scaleY(1.1);transform-origin:0 9.82px;">Equity Low (HK$)</div>
<div class="t" style="left:267.5px;top:392.8px;width:68px;text-align:center;font-size:11.4px;color:#111;transform:rotate(-90deg);transform-origin:50% 50%">Equity (HK$)</div>
<div class="a" style="left:2px;top:769px;width:1021px;height:19px;background:#f0f0f0"></div>
<div class="a" style="left:0;top:788px;width:1024px;height:1px;background:#404040"></div>
<div class="a" style="left:0;top:0;width:2px;height:789px;background:#000"></div>
<div class="a" style="left:1023px;top:0;width:1px;height:789px;background:#000"></div>
<div class="a" style="left:0;top:315px;width:2px;height:38px;background:#0a5a0a"></div>
<div class="a" style="left:0;top:356px;width:2px;height:20px;background:#052f05"></div>
<svg style="left:1010px;top:778px" width="14" height="11" viewBox="1010 778 14 11"><g fill="#b0b0b0"><rect x="1020" y="781" width="1.2" height="1.2"/><rect x="1017" y="784" width="1.2" height="1.2"/><rect x="1020" y="784" width="1.2" height="1.2"/><rect x="1014" y="786" width="1.2" height="1.2"/><rect x="1017" y="786" width="1.2" height="1.2"/><rect x="1020" y="786" width="1.2" height="1.2"/></g></svg>
</body></html>
